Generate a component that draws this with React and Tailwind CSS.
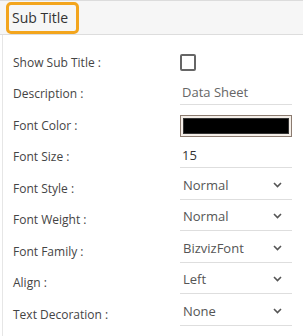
import React from "react";

const font = { fontFamily: '"Open Sans", "Noto Sans", Arial, sans-serif' };

function Chevron() {
  return (
    <svg width="9" height="6" viewBox="0 0 9 6" className="shrink-0">
      <polyline points="1,1 4.5,4.5 8,1" fill="none" stroke="#555" strokeWidth="1.6" />
    </svg>
  );
}

function Row({ label, children }) {
  return (
    <div className="flex h-[31.5px] items-center">
      <div className="w-[177px] pl-[10px] text-[12px] text-[#444]">{label}</div>
      <div className="flex w-[112px] items-center">{children}</div>
    </div>
  );
}

function TextVal({ v, color = "#555" }) {
  return (
    <div className="mb-[2px] flex h-[24px] w-[112px] items-center border-b border-[#dedede] pl-[2px] text-[13px]" style={{ color }}>
      {v}
    </div>
  );
}

function SelectVal({ v }) {
  return (
    <div className="mb-[4px] flex h-[26px] w-[112px] items-start justify-between border-b border-[#dedede] pl-[3px] pr-[10px] pt-[2px] text-[13px] text-[#555]">
      <span className="leading-[18px]">{v}</span>
      <span className="mt-[6px]"><Chevron /></span>
    </div>
  );
}

export default function App() {
  return (
    <div className="h-[336px] w-[303px] bg-white" style={font}>
      <div className="border-t border-[#dcdcdc]">
        <div className="flex h-[34px] items-center border-b border-[#dddddd] bg-[#f6f6f6] pl-[6px]">
          <div className="flex h-[32px] items-center rounded-[5px] border-[3px] border-[#f3a51d] pl-[3px] pr-[8px] text-[14px] text-[#333]">
            Sub Title
          </div>
        </div>
      </div>
      <div className="ml-[2px] h-[301px] border-l border-[#e6e6e6] pt-[12px]">
        <Row label="Show Sub Title :">
          <div className="h-[17px] w-[16px] rounded-[2px] border-2 border-[#666]" />
        </Row>
        <Row label="Description :">
          <TextVal v="Data Sheet" color="#666" />
        </Row>
        <Row label="Font Color :">
          <div className="flex h-[22px] w-[112px] border border-[#8b7b70] bg-[#f4eee8] p-[2px]">
            <div className="h-full w-full border border-[#333] bg-black" />
          </div>
        </Row>
        <Row label="Font Size :">
          <TextVal v="15" color="#333" />
        </Row>
        <Row label="Font Style :">
          <SelectVal v="Normal" />
        </Row>
        <Row label="Font Weight :">
          <SelectVal v="Normal" />
        </Row>
        <Row label="Font Family :">
          <SelectVal v="BizvizFont" />
        </Row>
        <Row label="Align :">
          <SelectVal v="Left" />
        </Row>
        <Row label="Text Decoration :">
          <SelectVal v="None" />
        </Row>
      </div>
    </div>
  );
}
